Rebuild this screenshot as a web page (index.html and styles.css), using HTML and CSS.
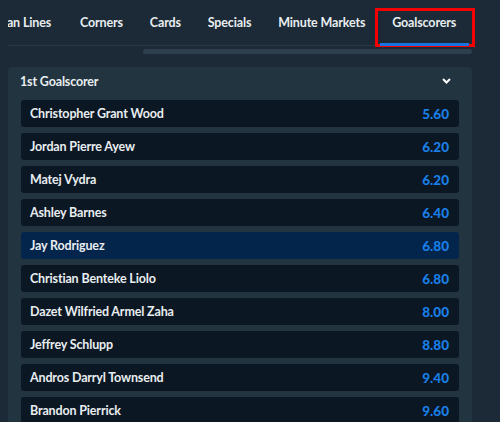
FILE: index.html
```html
<!DOCTYPE html>
<html lang="en">

<head>
    <meta charset="UTF-8">
    <meta name="viewport" content="width=device-width, initial-scale=1.0">
    <title>Goalscorers</title>
    <link rel="stylesheet" href="styles.css">
</head>

<body>
    <div class="market-nav">
        <div class="tabs">
            <ul class="tab-list">
                <li class="tab">Asian Lines</li>
                <li class="tab">Corners</li>
                <li class="tab">Cards</li>
                <li class="tab">Specials</li>
                <li class="tab">Minute Markets</li>
                <li class="tab active">Goalscorers</li>
            </ul>
        </div>
        <div class="scroll-track">
            <div class="scroll-thumb"></div>
        </div>
    </div>

    <div class="market">
        <div class="market-head">
            <span>1st Goalscorer</span>
            <svg class="chevron" width="9" height="6" viewBox="0 0 9 6">
                <path d="M1 1l3.5 3.5L8 1" fill="none" stroke="#fff" stroke-width="2" />
            </svg>
        </div>
        <ul class="runners">
            <li class="runner"><span>Christopher Grant Wood</span><b>5.60</b></li>
            <li class="runner"><span>Jordan Pierre Ayew</span><b>6.20</b></li>
            <li class="runner"><span>Matej Vydra</span><b>6.20</b></li>
            <li class="runner"><span>Ashley Barnes</span><b>6.40</b></li>
            <li class="runner selected"><span>Jay Rodriguez</span><b>6.80</b></li>
            <li class="runner"><span>Christian Benteke Liolo</span><b>6.80</b></li>
            <li class="runner"><span>Dazet Wilfried Armel Zaha</span><b>8.00</b></li>
            <li class="runner"><span>Jeffrey Schlupp</span><b>8.80</b></li>
            <li class="runner"><span>Andros Darryl Townsend</span><b>9.40</b></li>
            <li class="runner"><span>Brandon Pierrick</span><b>9.60</b></li>
        </ul>
    </div>
</body>

</html>
```

FILE: styles.css
```css
* {
    margin: 0;
    padding: 0;
    box-sizing: border-box;
}

html,
body {
    height: 100%;
    overflow: hidden;
}

body {
    background: #1b2a36;
    font-family: Lato, "Noto Sans", sans-serif;
    font-weight: 700;
    font-size: 12.5px;
    letter-spacing: -0.15px;
    color: #e9edf0;
}

ul {
    list-style: none;
}

/* tab strip, scrolled a little to the right */
.market-nav {
    width: 467px;
    margin-left: 8px;
}

.tabs {
    overflow-x: clip;
    overflow-y: visible;
    border-bottom: 1px solid #263845;
}

.tab-list {
    display: flex;
    margin-left: -31.5px;
    height: 45px;
}

.tab {
    position: relative;
    padding: 1px 13.5px 0;
    line-height: 44px;
    white-space: nowrap;
}

.tab:first-child {
    padding-right: 15.5px;
}

.tab.active::after {
    content: "";
    position: absolute;
    left: 1px;
    right: 1px;
    bottom: -1px;
    height: 3px;
    background: #1a73e0;
}

/* highlight frame round the current tab */
.tab.active::before {
    content: "";
    position: absolute;
    left: -3.5px;
    right: -5.5px;
    top: 8px;
    bottom: -2px;
    border: 3px solid #f40000;
}

.scroll-track {
    height: 5px;
    margin-top: 3px;
    padding-left: 135px;
    padding-right: 3px;
}

.scroll-thumb {
    height: 5px;
    border-radius: 3px;
    background: #2e404d;
}

/* market panel */
.market {
    width: 464px;
    margin: 13px 0 0 8px;
    background: #22343f;
    border-radius: 4px;
    padding: 0 13px 20px;
}

.market-head {
    display: flex;
    justify-content: space-between;
    align-items: center;
    height: 27px;
    margin-bottom: 6px;
    padding: 1px 8px 0 0;
    margin-left: -1px;
}

.chevron {
    display: block;
}

.runners {
    display: flex;
    flex-direction: column;
    gap: 6px;
}

.runner {
    display: flex;
    justify-content: space-between;
    align-items: center;
    height: 27px;
    padding: 0 10px 0 9px;
    background: #0b1824;
    border-radius: 3px;
}

.runner.selected {
    background: #03244b;
}

.runner b {
    color: #1a7fe8;
    font-size: 13.5px;
    letter-spacing: 0;
}
```
